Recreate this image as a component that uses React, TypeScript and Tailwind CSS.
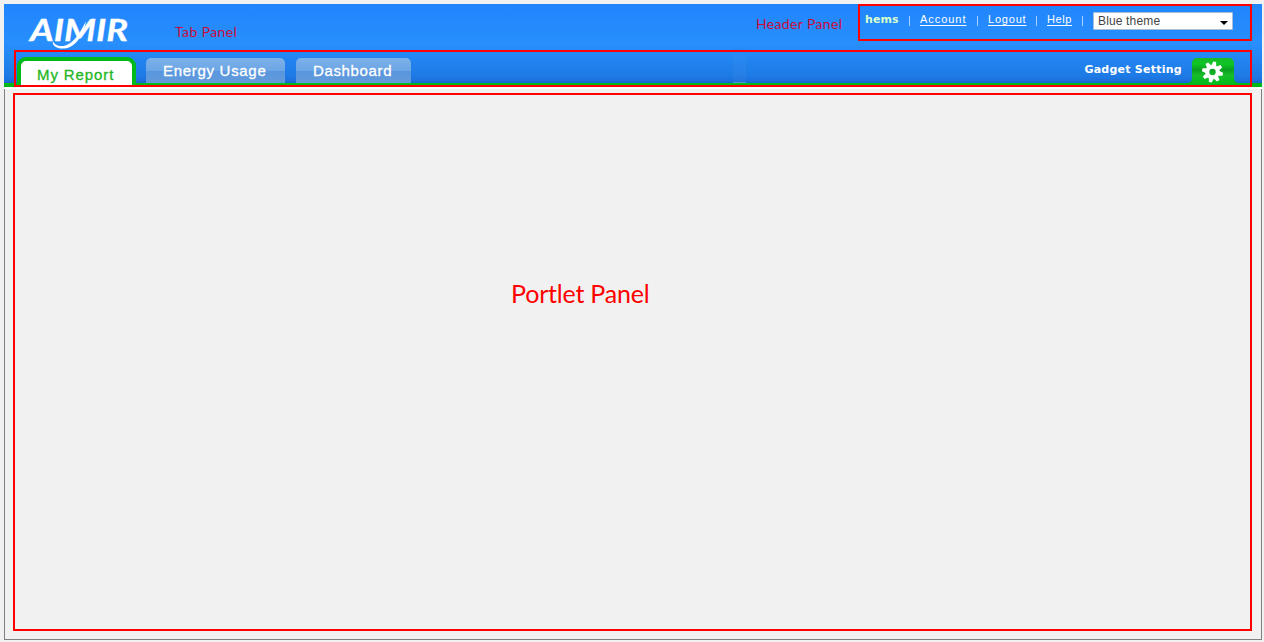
import React from 'react';

function Logo() {
  return (
    <svg width="104" height="34" viewBox="0 0 104 34" className="mt-3 ml-[24px] shrink-0 overflow-visible" aria-label="AIMIR">
      <text x="2" y="24.5" textLength="98" lengthAdjust="spacingAndGlyphs" fill="white" stroke="white" strokeWidth="0.3" fontSize="29.5" fontStyle="italic" fontWeight="700" fontFamily="Lato, sans-serif">AIMIR</text>
      <path d="M25 25C27 31 36 32 43 26.5C50 21 54 13 58 5C56 17 50 27 42 31C33 35 23 31 25 25Z" fill="white" />
    </svg>
  );
}

function Gear() {
  return (
    <svg width="22" height="22" viewBox="-10.5 -11 22 22">
      <g fill="white">
        {[0, 45, 90, 135, 180, 225, 270, 315].map((a) => (
          <path key={a} d="M-2.5 -6L-1.5 -10.5H1.5L2.5 -6Z" transform={`rotate(${a + 12})`} />
        ))}
      </g>
      <circle r="5.2" fill="none" stroke="white" strokeWidth="4" />
    </svg>
  );
}

function Divider() {
  return <span className="mt-[5px] h-[10px] w-px bg-[#a5d0ff]" />;
}

function Tab({ label, className, textClass }: { label: string; className: string; textClass: string }) {
  return (
    <div className={`mt-[6px] h-[25px] rounded-t-[5px] bg-[linear-gradient(#7db1ea_0px,#6ba5e5_13px,#5996de_13px,#629bdb_25px)] font-['Liberation_Sans',sans-serif] text-[15px] leading-[26px] whitespace-nowrap text-white [-webkit-text-stroke:0.3px_white] ${className}`}>
      <span className={textClass}>{label}</span>
    </div>
  );
}

export default function App() {
  return (
    <div className="flex h-[642px] w-[1264px] flex-col overflow-hidden bg-[#f1f1f1] pt-1 pr-[2px] pb-[2px] pl-1 font-['DejaVu_Sans',sans-serif]">
      <header className="h-[85px] shrink-0 bg-[linear-gradient(#2185fd_0px,#288ffd_39px,#1e7ae4_72px,#1b70dc_77px,#1664c8_79px,#00bb19_79px,#00b414_83px,white_83px)]">
        <div className="flex h-[46px]">
          <Logo />
          <span className="mt-[18px] ml-[43px] w-[70px] font-['Lato',sans-serif] text-[14px] leading-5 tracking-[0.4px] whitespace-nowrap text-[#c80c3c]">Tab Panel</span>
          <span className="mt-[10px] ml-[511px] w-[102px] font-['Lato',sans-serif] text-[14px] leading-5 tracking-[0.35px] whitespace-nowrap text-[#c80c3c]">Header Panel</span>
          <div className="flex h-[37px] w-[394px] shrink-0 border-2 border-[#ff0000] pt-[5px] font-['Liberation_Sans',sans-serif] text-[11px] leading-4 text-white">
            <b className="mt-px ml-[5px] w-[44px] font-['DejaVu_Sans',sans-serif] text-[11px] tracking-[0.1px] text-[#d9ffcf]">hems</b>
            <Divider />
            <a className="ml-[10px] w-[57px] tracking-[0.95px] underline underline-offset-2">Account</a>
            <Divider />
            <a className="ml-[10px] w-[48px] tracking-[0.8px] underline underline-offset-2">Logout</a>
            <Divider />
            <a className="ml-[10px] w-[35px] tracking-[0.6px] underline underline-offset-2">Help</a>
            <Divider />
            <div className="mt-[1px] ml-[10px] flex h-[18px] w-[140px] justify-between rounded-[1px] border border-[#a8bfd9] bg-white pl-[4px] text-[12px] leading-4 text-[#444]">
              <span className="tracking-[0.15px]">Blue theme</span>
              <svg width="8" height="5" viewBox="0 0 8 5" className="mt-[8px] mr-[4px]"><path d="M0 0H8L4 4Z" fill="black" /></svg>
            </div>
          </div>
        </div>
        <nav className="ml-[10px] flex h-[37px] w-[1238px] border-2 border-[#ff0000]">
          <div className="relative mt-[5px] ml-[1px] h-[28px] w-[119px] rounded-t-[9px] border-4 border-b-0 border-[#00b91b] bg-white pl-[16px] font-['Liberation_Sans',sans-serif] text-[15px] leading-[28px] tracking-[0.9px] whitespace-nowrap text-[#25b625] [-webkit-text-stroke:0.3px_#25b625]">
            My Report
            <svg width="4" height="4" className="absolute right-[-8px] bottom-0"><path d="M0 0Q0 4 4 4H0Z" fill="#00b91b" /></svg>
          </div>
          <Tab label="Energy Usage" className="ml-[10px] w-[139px] pl-[17px]" textClass="tracking-[0.7px]" />
          <Tab label="Dashboard" className="ml-[11px] w-[115px] pl-[17px]" textClass="tracking-[0.65px]" />
          <span className="mt-[2px] ml-[322px] h-[29px] w-[13px] border-b border-[#5090dd] bg-white/[0.03]" />
          <b className="mt-[10px] ml-auto text-[11px] leading-4 tracking-[0.25px] text-white">Gadget Setting</b>
          <div className="relative mt-[6px] mr-[16px] ml-[10px] flex h-[27px] w-[42px] justify-center rounded-t-[5px] bg-[linear-gradient(#18b929_0px,#0fc526_6px,#0b9f20_12px,#18bd29_17px,#00b91b_27px)] pt-[3px]">
            <Gear />
            <svg width="5" height="5" className="absolute bottom-[2px] left-[-5px]"><path d="M5 0Q5 5 0 5H5Z" fill="#00b91b" /></svg>
            <svg width="5" height="5" className="absolute right-[-5px] bottom-[2px]"><path d="M0 0Q0 5 5 5H0Z" fill="#00b91b" /></svg>
          </div>
        </nav>
      </header>
      <main className="h-[551px] w-[1258px] border border-t-0 border-[#808080] pt-1 pl-2">
        <section className="h-[538px] w-[1239px] border-2 border-[#ff0000] pt-[180px] pl-[496px]">
          <span className="font-['Lato',sans-serif] text-[25px] leading-9 tracking-[-0.2px] whitespace-nowrap text-[#ff0000]">Portlet Panel</span>
        </section>
      </main>
    </div>
  );
}
